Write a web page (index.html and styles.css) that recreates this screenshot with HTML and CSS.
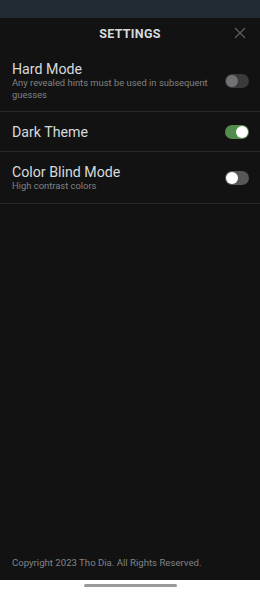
FILE: index.html
```html
<!DOCTYPE html>
<html lang="en">
<head>
    <meta charset="UTF-8">
    <meta name="viewport" content="width=device-width, initial-scale=1.0">
    <title>Settings</title>
    <link rel="stylesheet" href="styles.css">
</head>
<body>

    <div class="status-bar"></div>

    <div class="screen">
        <div class="header">
            <h1 class="title">SETTINGS</h1>
            <button class="close-button" aria-label="Close">
                <svg width="12" height="12" viewBox="0 0 12 12">
                    <path d="M1 1 L11 11 M11 1 L1 11" stroke="#5a5b5d" stroke-width="1.4" fill="none"/>
                </svg>
            </button>
        </div>

        <div class="setting hard">
            <div class="setting-text">
                <div class="setting-name">Hard Mode</div>
                <div class="setting-desc">Any revealed hints must be used in subsequent guesses</div>
            </div>
            <span class="switch disabled"><span class="knob"></span></span>
        </div>

        <div class="setting">
            <div class="setting-text">
                <div class="setting-name">Dark Theme</div>
            </div>
            <span class="switch on"><span class="knob"></span></span>
        </div>

        <div class="setting">
            <div class="setting-text">
                <div class="setting-name">Color Blind Mode</div>
                <div class="setting-desc">High contrast colors</div>
            </div>
            <span class="switch"><span class="knob"></span></span>
        </div>

        <div class="footer">Copyright 2023 Tho Dia. All Rights Reserved.</div>
    </div>

    <div class="nav-bar">
        <span class="home-indicator"></span>
    </div>

</body>
</html>
```

FILE: styles.css
```css
* {
    box-sizing: border-box;
}

body {
    margin: 0;
    width: 260px;
    height: 592px;
    display: flex;
    flex-direction: column;
    font-family: Roboto, "Liberation Sans", sans-serif;
    background-color: #121213;
    color: #d7dadc;
    overflow: hidden;
}

.status-bar {
    height: 18px;
    background-color: #222a34;
}

.screen {
    flex: 1;
    display: flex;
    flex-direction: column;
    background-color: #121213;
}

.header {
    position: relative;
    height: 30px;
    display: flex;
    align-items: center;
    justify-content: center;
}

.title {
    margin: 0;
    font-size: 12.5px;
    font-weight: 700;
    letter-spacing: 0.3px;
    color: #d7dadc;
}

.close-button {
    position: absolute;
    right: 14px;
    top: 9px;
    background: none;
    border: none;
    padding: 0;
    width: 12px;
    height: 12px;
    display: flex;
}

.setting {
    display: flex;
    align-items: center;
    justify-content: space-between;
    padding: 12px 11px 11px 12px;
    border-bottom: 1px solid #2a2a2c;
}

.setting.hard {
    padding-top: 13px;
    padding-bottom: 10px;
}

.setting-text {
    flex: 1;
    padding-right: 14px;
}

.setting-name {
    font-size: 14.2px;
    line-height: 16px;
    color: #d7dadc;
}

.setting-desc {
    font-size: 9.4px;
    line-height: 12px;
    color: #818384;
}

.switch {
    position: relative;
    width: 24px;
    height: 14px;
    border-radius: 7px;
    background-color: #565758;
    flex-shrink: 0;
}

.switch .knob {
    position: absolute;
    top: 1px;
    left: 1px;
    width: 12px;
    height: 12px;
    border-radius: 50%;
    background-color: #fff;
}

.switch.on {
    background-color: #538d4e;
}

.switch.on .knob {
    left: 11px;
}

.switch.disabled {
    background-color: #3a3a3c;
}

.switch.disabled .knob {
    background-color: #717273;
}

.footer {
    margin-top: auto;
    padding: 0 12px 11px;
    font-size: 9.6px;
    line-height: 12px;
    color: #818384;
}

.nav-bar {
    height: 12px;
    background-color: #fff;
    display: flex;
    justify-content: center;
    padding-top: 4px;
}

.home-indicator {
    width: 93px;
    height: 3px;
    border-radius: 2px;
    background-color: #9a9a9a;
}
```
